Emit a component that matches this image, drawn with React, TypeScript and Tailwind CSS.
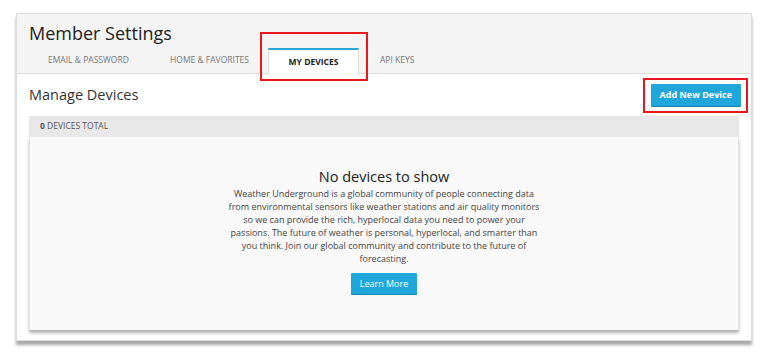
import React from "react";

const tabs = ["EMAIL & PASSWORD", "HOME & FAVORITES", "MY DEVICES", "API KEYS"];

const blurb = [
  "Weather Underground is a global community of people connecting data",
  "from environmental sensors like weather stations and air quality monitors",
  "so we can provide the rich, hyperlocal data you need to power your",
  "passions. The future of weather is personal, hyperlocal, and smarter than",
  "you think. Join our global community and contribute to the future of",
  "forecasting.",
];

export default function App() {
  return (
    <div className="w-full h-[359px] bg-white pt-[13px] pl-[16px] font-['Open_Sans',sans-serif]">
      <div className="relative w-[736px] h-[328px] border border-[#dcdcdc] bg-white shadow-[0_4px_3px_rgba(0,0,0,0.35)]">
        {/* Header */}
        <div className="h-[60px] bg-[#f4f4f4] border-b border-[#dcdcdc] flex flex-col">
          <h1 className="pl-[12px] pt-[6px] text-[18px] leading-[26px] text-[#222]">Member Settings</h1>
          <div className="flex items-end h-[27px] mt-auto">
            <div className="w-[152px] pl-[31px] text-[8.5px] text-[#777] pb-[6px]">{tabs[0]}</div>
            <div className="w-[99px] pl-[1px] text-[8.5px] text-[#777] pb-[6px]">{tabs[1]}</div>
            <div className="w-[91px] h-[26px] -mb-px bg-white border-t-2 border-[#2aa5d6] border-x border-x-[#dcdcdc] flex items-center justify-center text-[8.5px] font-bold text-[#222]">
              {tabs[2]}
            </div>
            <div className="pl-[21px] text-[8.5px] text-[#777] pb-[6px]">{tabs[3]}</div>
          </div>
        </div>

        {/* Body */}
        <div className="px-[12px]">
          <div className="flex items-center justify-between h-[42px]">
            <h2 className="text-[14.5px] text-[#333]">Manage Devices</h2>
            <button className="mr-[-2px] h-[22px] px-[9px] bg-[#1fa6db] text-white text-[9px] font-bold rounded-[1px] shadow-[0_1px_0_#1583ae]">
              Add New Device
            </button>
          </div>
          <div className="h-[21px] bg-[#e8e8e8] flex items-center pl-[11px] text-[8.5px] text-[#555]">
            <span className="font-bold">0</span>&nbsp;DEVICES TOTAL
          </div>
          <div className="h-[193px] bg-[#f9f9f9] border-x border-[#e4e4e4] shadow-[0_3px_3px_rgba(0,0,0,0.3)] flex flex-col items-center pt-[30px]">
            <h3 className="text-[14.5px] leading-[20px] text-[#222]">No devices to show</h3>
            <p className="text-center text-[9px] leading-[13px] text-[#444] whitespace-nowrap">
              {blurb.map((line, i) => (
                <React.Fragment key={i}>
                  {line}
                  {i < blurb.length - 1 && <br />}
                </React.Fragment>
              ))}
            </p>
            <button className="mt-[8px] h-[21px] w-[66px] bg-[#1fa6db] text-white text-[9px] rounded-[1px] shadow-[0_1px_0_#1583ae]">
              Learn More
            </button>
          </div>
        </div>

        {/* annotation boxes */}
        <div className="absolute left-[243px] top-[18px] w-[108px] h-[49px] border-2 border-[#e8171c]" />
        <div className="absolute left-[626px] top-[64px] w-[105px] h-[35px] border-2 border-[#e8171c]" />
      </div>
    </div>
  );
}
